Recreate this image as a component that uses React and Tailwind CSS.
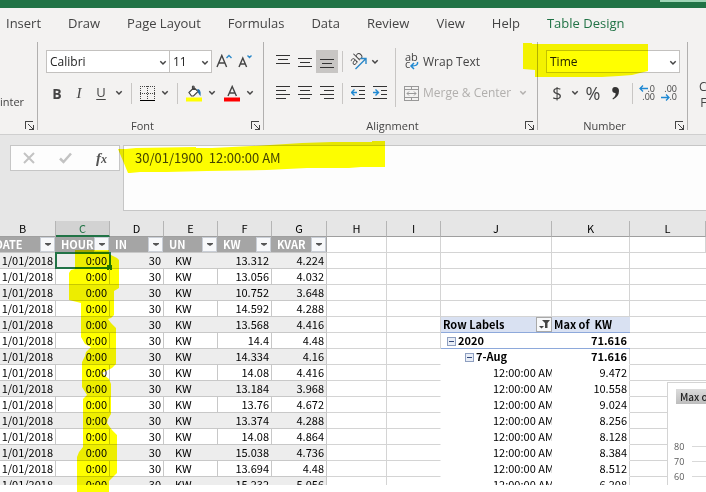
import React from 'react';

const COLUMNS = ['B', 'C', 'D', 'E', 'F', 'G', 'H', 'I', 'J', 'K', 'L'];

const HEADINGS = ['DATE', 'HOUR', 'IN', 'UN', 'KW', 'KVAR'];

const READINGS = [
  ['13.312', '4.224'],
  ['13.056', '4.032'],
  ['10.752', '3.648'],
  ['14.592', '4.288'],
  ['13.568', '4.416'],
  ['14.4', '4.48'],
  ['14.334', '4.16'],
  ['14.08', '4.416'],
  ['13.184', '3.968'],
  ['13.76', '4.672'],
  ['13.374', '4.288'],
  ['14.08', '4.864'],
  ['15.038', '4.736'],
  ['13.694', '4.48'],
  ['15.232', '5.056'],
];

const PIVOT_START = 4;
const PIVOT_VALUES = ['', '71.616', '71.616', '9.472', '10.558', '9.024', '8.256', '8.128', '8.384', '8.512', '6.208'];

const Chevron = ({ className = '' }) => (
  <svg width="8" height="6" viewBox="0 0 8 6" fill="none" stroke="currentColor" strokeWidth="1.5" className={className}>
    <path d="M1.3 1.3 4 4l2.7-2.7" />
  </svg>
);

const Launcher = () => (
  <button aria-label="More options" className="absolute right-[3px] bottom-0">
    <svg width="9" height="9" viewBox="0 0 9 9" fill="none" stroke="#444" shapeRendering="crispEdges">
      <path d="M.5 8V.5H8M8.5 4v4.5H4M3 3l5 5" />
    </svg>
  </button>
);

const Group = ({ label, className, children }) => (
  <section className={`relative flex h-[88px] shrink-0 flex-col border-r border-[#b1b0af] ${className}`}>
    {children}
    <div className="absolute right-4 bottom-0 left-0 text-center text-[11px] leading-[8px]">{label}</div>
    <Launcher />
  </section>
);

const Divider = () => <span className="block h-[21px] w-px bg-[#c8c6c4]" />;

const Combo = ({ label, value, className }) => (
  <div className={`relative h-[23px] border border-[#c3c1bf] bg-white ${className}`}>
    <select aria-label={label} className="block h-[21px] w-full appearance-none bg-transparent pl-[3px] text-[12px] leading-[21px] text-[#222] outline-none">
      <option>{value}</option>
    </select>
    <Chevron className="pointer-events-none absolute top-[9px] right-[2px]" />
  </div>
);

// each entry is [x1, x2] of one stroke
const Lines = ({ rows, y = 0, h = 14 }) => (
  <svg width="14" height={h} viewBox={`0 0 14 ${h}`} stroke="#333" shapeRendering="crispEdges">
    {rows.map(([a, b], i) => (
      <path key={i} d={`M${a} ${y + i * 4 + 0.5}H${b}`} />
    ))}
  </svg>
);

const FontGroup = () => (
  <Group label="Font" className="w-[226px] pt-2 pl-2">
    <div className="flex items-center">
      <Combo label="Font" value="Calibri" className="w-[124px]" />
      <Combo label="Font size" value="11" className="-ml-px w-[43px]" />
      <button aria-label="Increase font size" className="ml-1">
        <svg width="16" height="16" viewBox="0 0 16 16" fill="none" stroke="#444" strokeWidth="1.4">
          <path d="M1 13 5.8 1.500 10.600 13M2.800 9h6" />
          <path d="M10.500 4 13 1.500 15.500 4" stroke="#2b88c8" />
        </svg>
      </button>
      <button aria-label="Decrease font size" className="ml-[6px]">
        <svg width="16" height="16" viewBox="0 0 16 16" fill="none" stroke="#444" strokeWidth="1.4">
          <path d="M1 13 4.800 4l3.800 9M2.400 10h4.800" />
          <path d="M9.500 1.500l2 2 2-2" stroke="#2b88c8" />
        </svg>
      </button>
    </div>
    <div className="mt-2 flex h-6 items-center">
      <button aria-label="Bold" className="ml-[3px] w-4 text-[14px] font-bold">B</button>
      <button aria-label="Italic" className="ml-[6px] w-4 font-['Liberation_Serif',serif] text-[15px] italic">I</button>
      <button aria-label="Underline" className="ml-[6px] w-4 text-[13px] underline underline-offset-2">U</button>
      <button aria-label="Underline styles" className="ml-[6px]"><Chevron /></button>
      <span className="ml-2"><Divider /></span>
      <button aria-label="Borders" className="ml-2">
        <svg width="15" height="15" viewBox="0 0 15 15" stroke="#444" shapeRendering="crispEdges">
          <path d="M0 .5h15M0 7.5h15M.5 0v15M7.5 0v15M14.5 0v15" strokeDasharray="1 1" />
          <path d="M0 14.5h15" stroke="#000" />
        </svg>
      </button>
      <button aria-label="Border styles" className="ml-[6px]"><Chevron /></button>
      <span className="ml-2"><Divider /></span>
      <button aria-label="Fill color" className="ml-2">
        <svg width="16" height="17" viewBox="0 0 16 17" fill="none" stroke="#444" strokeWidth="1.2">
          <path d="M3 7.500 8 2.500l4 4-4.500 4.500H5.500ZM8 5V1.500Q7 .5 6.500 1.500V4" fill="#fff" />
          <path d="M11.500 4.500q3 .5 2.500 5l-2-3" stroke="#1e6fae" fill="#1e6fae" />
          <path d="M0 14.500h16" stroke="#ff0" strokeWidth="4" />
        </svg>
      </button>
      <button aria-label="Fill colors" className="ml-[6px]"><Chevron /></button>
      <button aria-label="Font color" className="ml-2">
        <svg width="16" height="17" viewBox="0 0 16 17" fill="none" stroke="#444" strokeWidth="1.4">
          <path d="M4 11 8.200 1.500 12.400 11M5.500 8h5.400" />
          <path d="M0 14.500h16" stroke="#f00" strokeWidth="4" />
        </svg>
      </button>
      <button aria-label="Font colors" className="ml-[6px]"><Chevron /></button>
    </div>
  </Group>
);

const AlignmentGroup = () => (
  <Group label="Alignment" className="w-[274px] pt-2">
    <div className="flex">
      <div>
        <div className="flex h-[23px] items-center pl-3">
          <button aria-label="Top align"><Lines rows={[[0, 14], [2, 12], [0, 14]]} y={0} /></button>
          <button aria-label="Middle align" className="ml-2"><Lines rows={[[0, 14], [2, 12], [0, 14]]} y={2} h={12} /></button>
          <button aria-label="Bottom align" className="ml-1 flex h-[23px] w-[22px] items-end justify-center bg-[#c8c6c4]">
            <Lines rows={[[0, 14], [2, 12], [0, 14]]} />
          </button>
          <span className="ml-1"><Divider /></span>
          <button aria-label="Orientation" className="ml-[7px]">
            <svg width="17" height="17" viewBox="0 0 17 17" fill="none" stroke="#2b88c8" strokeWidth="1.4">
              <text fontSize="12" fill="#444" stroke="none" transform="translate(4 13) rotate(-45)">ab</text>
              <path d="M5.500 16 15.500 6M10.500 5.500h5.500V11" />
            </svg>
          </button>
          <button aria-label="Orientation options" className="ml-1"><Chevron /></button>
        </div>
        <div className="mt-2 flex h-6 items-center pl-3">
          <button aria-label="Align left"><Lines rows={[[0, 14], [0, 10], [0, 14], [0, 10]]} /></button>
          <button aria-label="Center" className="ml-2"><Lines rows={[[0, 14], [2, 12], [0, 14], [2, 12]]} /></button>
          <button aria-label="Align right" className="ml-2"><Lines rows={[[0, 14], [4, 14], [0, 14], [4, 14]]} /></button>
          <span className="ml-2"><Divider /></span>
          <button aria-label="Decrease indent" className="ml-2">
            <svg width="14" height="14" viewBox="0 0 14 14" fill="none" stroke="#333" shapeRendering="crispEdges">
              <path d="M0 .5h14M8 4.500h6M8 8.500h6M0 12.500h14" />
              <path d="M6 6.500H1M3.500 3.500l-3 3 3 3" stroke="#1e88d2" strokeWidth="1.4" shapeRendering="auto" />
            </svg>
          </button>
          <button aria-label="Increase indent" className="ml-2">
            <svg width="14" height="14" viewBox="0 0 14 14" fill="none" stroke="#333" shapeRendering="crispEdges">
              <path d="M0 .5h14M8 4.500h6M8 8.500h6M0 12.500h14" />
              <path d="M0 6.500h5M2.500 3.500l3 3-3 3" stroke="#1e88d2" strokeWidth="1.4" shapeRendering="auto" />
            </svg>
          </button>
        </div>
      </div>
      <div className="-mt-[2px] ml-2 h-[59px] w-px bg-[#c8c6c4]" />
      <div className="ml-2">
        <button className="flex h-[23px] items-center gap-1 text-[12px] whitespace-nowrap">
          <svg width="15" height="17" viewBox="0 0 15 17" fill="none" stroke="#1e88d2" strokeWidth="1.5">
            <text x="1" y="8" fontSize="11" fill="#444" stroke="none">ab</text>
            <text x="1" y="15" fontSize="11" fill="#444" stroke="none">c</text>
            <path d="M13.500 9q1 4-6 4M10 10l-3 3 3 3" />
          </svg>
          Wrap Text
        </button>
        <button className="mt-2 flex h-6 items-center gap-1 text-[12px] whitespace-nowrap text-[#b1afad]">
          <svg width="15" height="15" viewBox="0 0 15 15" fill="none" stroke="#999">
            <path d="M.5.5h14v14H.5ZM.5 3.500h14M.5 11.500h14M7.500.5v3M7.500 11.500v3" shapeRendering="crispEdges" />
            <path d="M3 7.500h9M5 5.500l-2 2 2 2M10 5.500l2 2-2 2" />
          </svg>
          Merge &amp; Center
          <Chevron className="ml-1" />
        </button>
      </div>
    </div>
  </Group>
);

const NumberGroup = () => (
  <Group label="Number" className="w-[150px] pt-2 pl-2">
    <Combo label="Number format" value="Time" className="w-[134px]" />
    <div className="mt-2 flex h-6 items-center">
      <button aria-label="Accounting format" className="ml-[5px] w-3 text-[17px] leading-6">$</button>
      <button aria-label="Accounting options" className="ml-2"><Chevron /></button>
      <button aria-label="Percent style" className="ml-[6px] w-4 text-[18px] leading-6">%</button>
      <button aria-label="Comma style" className="ml-[10px]">
        <svg width="9" height="14" viewBox="0 0 9 14" fill="#333">
          <path d="M4 1a3 3 0 1 0 .5 6Q5 10 1.500 12.500L2 13.500Q8 10.500 8 5 8 1 4 1Z" />
        </svg>
      </button>
      <span className="ml-3"><Divider /></span>
      <button aria-label="Increase decimal" className="relative ml-[6px] flex w-4 flex-col items-end text-[9px] leading-[8px]">
        <span>.0</span><span>.00</span>
        <svg width="9" height="7" viewBox="0 0 9 7" fill="none" stroke="#1e88d2" strokeWidth="1.3" className="absolute top-0 left-0">
          <path d="M9 3.500H1M4 .5l-3 3 3 3" />
        </svg>
      </button>
      <button aria-label="Decrease decimal" className="relative ml-[6px] flex w-4 flex-col items-end text-[9px] leading-[8px]">
        <span>.00</span><span>.0</span>
        <svg width="9" height="7" viewBox="0 0 9 7" fill="none" stroke="#1e88d2" strokeWidth="1.3" className="absolute bottom-0 left-0">
          <path d="M0 3.500h8M5 .5l3 3-3 3" />
        </svg>
      </button>
    </div>
  </Group>
);

const Tabs = () => (
  <nav className="flex h-8 shrink-0 items-center gap-[27px] pl-[6px] text-[13px] whitespace-nowrap">
    {['Insert', 'Draw', 'Page Layout', 'Formulas', 'Data', 'Review', 'View', 'Help'].map(tab => (
      <a key={tab} href="#">{tab}</a>
    ))}
    <a href="#" className="text-[#217346]">Table Design</a>
  </nav>
);

const FormulaBar = () => (
  <div className="flex h-[87px] shrink-0 items-start gap-[3px] border-t border-[#cfcfcf] bg-[#e6e6e6] pt-[10px] pl-[10px]">
    <div className="flex h-[26px] w-[110px] items-center border border-[#c6c6c6] bg-[#fdfdfd] pl-3">
      <button aria-label="Cancel">
        <svg width="12" height="12" viewBox="0 0 12 12" stroke="#c3c3c3" strokeWidth="2"><path d="m1 1 10 10M11 1 1 11" /></svg>
      </button>
      <button aria-label="Enter" className="ml-6">
        <svg width="13" height="12" viewBox="0 0 13 12" fill="none" stroke="#c3c3c3" strokeWidth="2.5"><path d="m1 6.500 3.500 3.500L12 1.500" /></svg>
      </button>
      <button aria-label="Insert function" className="ml-6 font-['Liberation_Serif',serif] text-[15px] leading-4 font-bold text-[#555] italic">
        f<span className="text-[12px]">x</span>
      </button>
    </div>
    <textarea
      aria-label="Formula bar"
      defaultValue="30/01/1900  12:00:00 AM"
      className="h-[66px] min-w-0 flex-1 resize-none border border-r-0 border-[#c6c6c6] bg-[#fdfdfd] py-[3px] pl-[11px] font-['Noto_Sans_CJK_SC',sans-serif] text-[13px] leading-[18px] outline-none"
    />
  </div>
);

const FilterButton = ({ label }) => (
  <button aria-label={`Filter ${label}`} className="absolute top-0 right-px flex h-[15px] w-[15px] items-center justify-center border border-[#c9ced6] bg-[#f7f8fa]">
    <svg width="6" height="3" viewBox="0 0 6 3" fill="#555"><path d="M0 0h6v1L3 3 0 1Z" /></svg>
  </button>
);

const Collapse = () => (
  <button aria-label="Collapse" className="mr-[2px] inline-block h-[9px] w-[9px] border border-[#8e9fc0] bg-[#e9eef7]">
    <span className="mx-auto block h-px w-[5px] bg-[#30477a]" />
  </button>
);

const PivotCells = ({ row }) => {
  const index = row - PIVOT_START;
  const grid = 'border-r border-b border-[#d4d4d4]';
  if (index < 0) {
    return <><td className={grid} /><td className={grid} /></>;
  }
  if (index === 0) {
    return (
      <>
        <td className="relative border-b border-[#8ea9db] bg-[#d9e1f2] pl-[2px] font-bold">
          Row Labels
          <button aria-label="Filter rows" className="absolute top-0 right-0 flex h-[15px] w-4 items-center justify-center border border-[#a9a9a9] bg-[#f7f8fa]">
            <svg width="11" height="9" viewBox="0 0 11 9" fill="#444"><path d="M3 0h8L8.500 3v5H6V3ZM0 6h5L2.500 8.500Z" /></svg>
          </button>
        </td>
        <td className="border-b border-[#8ea9db] bg-[#d9e1f2] pl-[2px] font-bold whitespace-pre">Max of  KW</td>
      </>
    );
  }
  const value = PIVOT_VALUES[index];
  if (index === 1) {
    return (
      <>
        <td className="border-b border-[#8ea9db] pl-[6px] font-bold"><Collapse />2020</td>
        <td className="border-b border-[#8ea9db] pr-[3px] text-right font-bold">{value}</td>
      </>
    );
  }
  const valueCell = 'border-r border-b border-r-[#d4d4d4] border-b-white pr-[2px] text-right';
  if (index === 2) {
    return (
      <>
        <td className="border-b border-white pl-6 font-bold"><Collapse />7-Aug</td>
        <td className={`${valueCell} font-bold`}>{value}</td>
      </>
    );
  }
  return (
    <>
      <td className="overflow-hidden border-b border-white pl-[52px]">12:00:00 AM</td>
      <td className={valueCell}>{value}</td>
    </>
  );
};

const Sheet = () => (
  <table className="-ml-[10px] w-[calc(100%+10px)] table-fixed border-separate border-spacing-0 font-['Noto_Sans_CJK_SC',sans-serif] text-[11px] leading-[15px] whitespace-nowrap text-black">
    <colgroup>
      <col className="w-[66px]" />
      <col className="w-[54px]" />
      <col className="w-[54px]" />
      <col className="w-[54px]" />
      <col className="w-[54px]" />
      <col className="w-[55px]" />
      <col className="w-[60px]" />
      <col className="w-[54px]" />
      <col className="w-[111px]" />
      <col className="w-[78px]" />
      <col />
    </colgroup>
    <thead>
      <tr className="h-4">
        {COLUMNS.map(name => (
          <th
            key={name}
            className={name === 'C'
              ? 'border-r border-b-2 border-r-[#b5b5b5] border-b-[#217346] bg-[#d2d2d2] p-0 leading-[14px] font-normal text-[#217346]'
              : 'border-r border-b border-r-[#b5b5b5] border-b-[#9f9f9f] bg-[#e6e6e6] p-0 font-normal'}
          >
            {name}
          </th>
        ))}
      </tr>
    </thead>
    <tbody>
      <tr className="h-4">
        {HEADINGS.map(name => (
          <th key={name} className="relative border-b border-[#c8c8c8] bg-[#a5a5a5] p-0 pl-[5px] text-left font-bold text-white">
            {name}
            <FilterButton label={name} />
          </th>
        ))}
        {COLUMNS.slice(6).map(name => <td key={name} className="border-r border-b border-[#d4d4d4]" />)}
      </tr>
      {READINGS.map(([kw, kvar], row) => {
        const cell = row % 2 === 0
          ? 'border-b border-[#c8c8c8] bg-[#ededed]'
          : 'border-r border-b border-[#c8c8c8]';
        const pad = row % 2 === 0 ? 'pr-[3px]' : 'pr-[2px]';
        return (
          <tr key={row} className="h-4 *:py-0">
            <td className={`${cell} ${pad} text-right`}>1/01/2018</td>
            <td className={`${cell} ${pad} relative text-right`}>
              0:00
              {row === 0 && (
                <span className="absolute -inset-x-px -top-px -bottom-px border-2 border-[#217346]">
                  <span className="absolute -right-[3px] -bottom-[3px] h-[5px] w-[5px] bg-[#217346]" />
                </span>
              )}
            </td>
            <td className={`${cell} ${pad} text-right`}>30</td>
            <td className={`${cell} pl-[11px]`}>KW</td>
            <td className={`${cell} ${pad} text-right`}>{kw}</td>
            <td className={`${cell} border-r pr-[2px] text-right`}>{kvar}</td>
            <td className="border-r border-b border-[#d4d4d4]" />
            <td className={`border-b border-[#d4d4d4] ${row > 5 ? 'border-r border-r-white' : 'border-r'}`} />
            <PivotCells row={row} />
            <td className="border-b border-[#d4d4d4]" />
          </tr>
        );
      })}
    </tbody>
  </table>
);

const Chart = () => (
  <div className="absolute top-[161px] -right-40 h-60 w-[199px] border border-[#d4d4d4] bg-white text-[#595959]">
    <button className="mt-[6px] ml-2 block h-[15px] w-40 bg-linear-to-b from-[#dcdcdc] to-[#bdbdbd] pl-1 text-left font-['Noto_Sans_CJK_SC',sans-serif] text-[10px] leading-[15px] font-medium text-[#222]">Max of KW</button>
    <div className="mt-[35px] pl-[6px] text-[9px]">
      {[80, 70, 60].map(tick => (
        <div key={tick} className="flex h-[15px] items-center gap-2">
          {tick}<span className="h-px flex-1 bg-[#d9d9d9]" />
        </div>
      ))}
    </div>
  </div>
);

const Highlights = () => (
  <svg width="706" height="492" viewBox="0 0 706 492" fill="#ff0" aria-hidden="true" className="pointer-events-none absolute top-0 left-0 mix-blend-multiply">
    <path d="M523 43h9v1h116v27l-4 1-12 3-13 1-17 1h-67v-7l-12-1Z" />
    <path d="M118 149h8l10-1 60-1v1h16l40-2 50-3 30-1h40v-1h13v26h-24l-12 1h-42l-40 2-60 1-40 1h-27l-10 1h-2Z" />
    <path d="M75 250h34v4l8 4 2 2v28l-5 3v24l-3 3-3 1 3 4 5 5v36l-4 4-10 5 2 2 5 4 2 5v30l-3 5-1 4 5 7 5 5v38l-8 8v12H89l-12 1V457l2-5 4-5v-48l4-4-5-8v-25l3-6 1-4 5-5-6-3-4-7v-34l-12-3v-27l2-3 4-1Z" />
  </svg>
);

export default function App() {
  return (
    <div className="relative isolate flex h-screen flex-col overflow-hidden bg-white pb-[7px] font-['Open_Sans',sans-serif] text-[#444]">
      <div className="flex h-2 shrink-0 justify-end bg-[#217346]">
        <span className="h-[2px] w-[46px] bg-[#9fd5b7]" />
      </div>
      <div className="shrink-0 bg-[#f3f2f1]">
        <Tabs />
        <div className="flex overflow-hidden pt-[2px] pb-1">
          <section className="relative flex h-[88px] w-[38px] shrink-0 items-center border-r border-[#b1b0af] pt-[32px] text-[11px]">
            <button>inter</button>
            <Launcher />
          </section>
          <FontGroup />
          <AlignmentGroup />
          <NumberGroup />
          <div className="shrink-0 pt-[37px] pl-[11px] text-[12px] leading-4">
            <button className="text-center">Conditional<br />Formatting</button>
          </div>
        </div>
      </div>
      <FormulaBar />
      <div className="relative min-h-0 flex-1 overflow-hidden">
        <Sheet />
        <Chart />
      </div>
      <Highlights />
    </div>
  );
}
